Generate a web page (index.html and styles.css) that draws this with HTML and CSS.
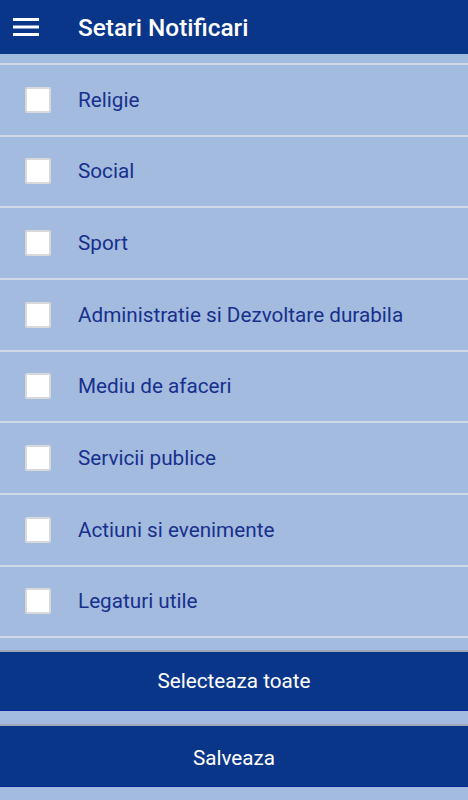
FILE: index.html
```html
<!DOCTYPE html>
<html lang="ro">
<head>
    <meta charset="UTF-8">
    <meta name="viewport" content="width=device-width, initial-scale=1.0">
    <title>Setari Notificari</title>
    <link rel="stylesheet" href="styles.css">
</head>
<body>
    <header class="toolbar">
        <button class="menu-btn" aria-label="Meniu">
            <svg width="26" height="20" viewBox="0 0 26 20">
                <rect x="0" y="1" width="26" height="3" fill="#fff"/>
                <rect x="0" y="8.5" width="26" height="3" fill="#fff"/>
                <rect x="0" y="16" width="26" height="3" fill="#fff"/>
            </svg>
        </button>
        <h1 class="title">Setari Notificari</h1>
    </header>

    <ul class="topics">
        <li class="topic"><span class="check"></span><span class="label">Religie</span></li>
        <li class="topic"><span class="check"></span><span class="label">Social</span></li>
        <li class="topic"><span class="check"></span><span class="label">Sport</span></li>
        <li class="topic"><span class="check"></span><span class="label">Administratie si Dezvoltare durabila</span></li>
        <li class="topic"><span class="check"></span><span class="label">Mediu de afaceri</span></li>
        <li class="topic"><span class="check"></span><span class="label">Servicii publice</span></li>
        <li class="topic"><span class="check"></span><span class="label">Actiuni si evenimente</span></li>
        <li class="topic"><span class="check"></span><span class="label">Legaturi utile</span></li>
    </ul>

    <div class="actions">
        <button class="action">Selecteaza toate</button>
        <button class="action">Salveaza</button>
    </div>
</body>
</html>
```

FILE: styles.css
```css
html, body {
    margin: 0;
    padding: 0;
}
body {
    font-family: Roboto, "Liberation Sans", Arial, sans-serif;
    background: #a3bbdf;
    height: 800px;
    overflow: hidden;
}
.toolbar {
    display: flex;
    align-items: center;
    height: 54px;
    background: #0a368a;
    color: #fff;
}
.menu-btn {
    display: flex;
    align-items: center;
    justify-content: center;
    width: 26px;
    height: 54px;
    margin-left: 13px;
    padding: 0;
    background: none;
    border: none;
}
.title {
    margin: 0 0 0 39px;
    font-size: 24.4px;
    font-weight: 500;
}
.topics {
    list-style: none;
    margin: 9px 0 0;
    padding: 0;
}
.topic {
    display: flex;
    align-items: center;
    box-sizing: border-box;
    height: 71.67px;
    border-top: 2px solid #d2d9e6;
}
.topic:last-child {
    border-bottom: 2px solid #d2d9e6;
    height: 73.67px;
}
.check {
    box-sizing: border-box;
    width: 26px;
    height: 26px;
    margin-left: 25px;
    background: #fff;
    border: 2px solid #d9d9d9;
    border-radius: 2px;
}
.label {
    margin-left: 27px;
    font-size: 20.7px;
    color: #17308c;
}
.actions {
    display: flex;
    flex-direction: column;
    gap: 13px;
    margin-top: 12px;
}
.action {
    box-sizing: border-box;
    width: 100%;
    height: 61px;
    padding: 0;
    font-family: inherit;
    font-size: 20.7px;
    color: #fff;
    background: #0a368a;
    border: none;
    border-top: 2px solid #9ea7b6;
    border-bottom: 1px solid #0a2698;
}
.action + .action {
    height: 63px;
    padding-top: 3px;
}
```
